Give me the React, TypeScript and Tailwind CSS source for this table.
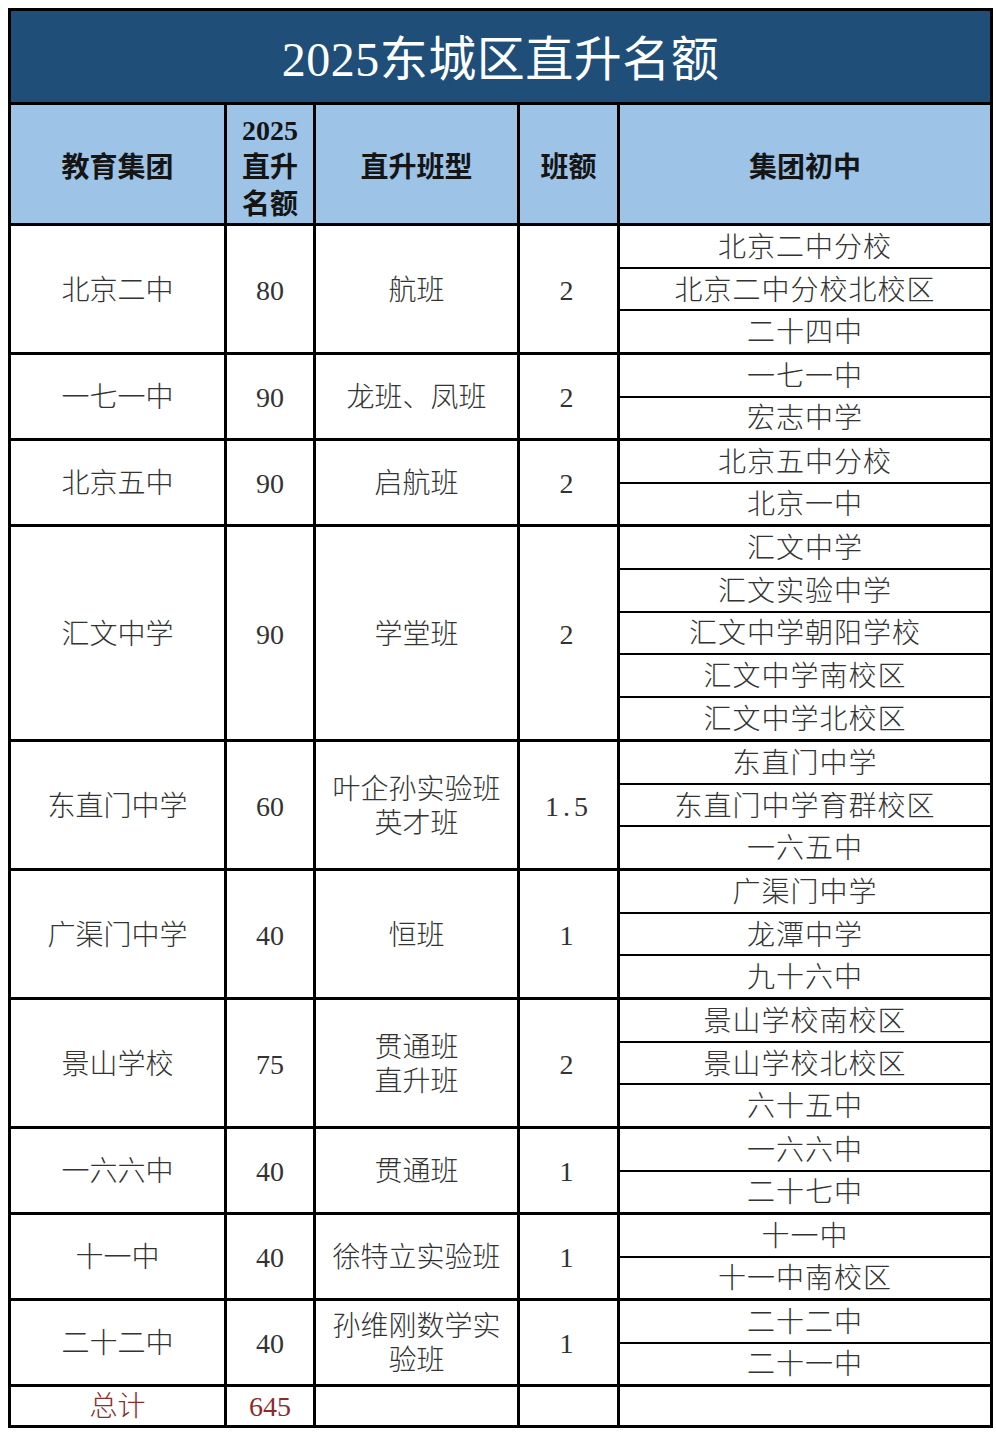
const groups = [
  { name: "北京二中", quota: "80", cls: ["航班"], num: "2", schools: ["北京二中分校", "北京二中分校北校区", "二十四中"] },
  { name: "一七一中", quota: "90", cls: ["龙班、凤班"], num: "2", schools: ["一七一中", "宏志中学"] },
  { name: "北京五中", quota: "90", cls: ["启航班"], num: "2", schools: ["北京五中分校", "北京一中"] },
  {
    name: "汇文中学",
    quota: "90",
    cls: ["学堂班"],
    num: "2",
    schools: ["汇文中学", "汇文实验中学", "汇文中学朝阳学校", "汇文中学南校区", "汇文中学北校区"],
  },
  { name: "东直门中学", quota: "60", cls: ["叶企孙实验班", "英才班"], num: "1.5", schools: ["东直门中学", "东直门中学育群校区", "一六五中"] },
  { name: "广渠门中学", quota: "40", cls: ["恒班"], num: "1", schools: ["广渠门中学", "龙潭中学", "九十六中"] },
  { name: "景山学校", quota: "75", cls: ["贯通班", "直升班"], num: "2", schools: ["景山学校南校区", "景山学校北校区", "六十五中"] },
  { name: "一六六中", quota: "40", cls: ["贯通班"], num: "1", schools: ["一六六中", "二十七中"] },
  { name: "十一中", quota: "40", cls: ["徐特立实验班"], num: "1", schools: ["十一中", "十一中南校区"] },
  { name: "二十二中", quota: "40", cls: ["孙维刚数学实", "验班"], num: "1", schools: ["二十二中", "二十一中"] },
];

// 每个子行 43px，减去组间 3px 线
const heights: Record<number, string> = {
  2: "h-[83px]",
  3: "h-[126px]",
  5: "h-[212px]",
};

const cols = "grid grid-cols-[213px_86px_201px_97px_1fr] gap-[3px]";
const cjk = "font-['Liberation_Serif','Noto_Sans_CJK_SC',serif]";

export default function App() {
  return (
    <div className="min-h-screen w-full bg-white pl-[8px] pt-[8px]">
      <div className={`w-[985px] bg-black p-[3px] flex flex-col gap-[3px] ${cjk}`}>
        <div className="h-[91px] bg-[#1f4e79] flex items-center justify-center pt-[6px] text-white text-[48px] leading-[56px] tracking-[0.5px]">
          2025东城区直升名额
        </div>

        <div className={`${cols} h-[118px]`}>
          {["教育集团", "2025\n直升\n名额", "直升班型", "班额", "集团初中"].map((h, i) => (
            <div
              key={i}
              className="bg-[#9dc3e6] flex items-center justify-center pt-[6px] text-center whitespace-pre-line font-bold text-[28px] leading-[37px] text-[#151515]"
            >
              {h}
            </div>
          ))}
        </div>

        {groups.map((g, i) => (
          <div key={i} className={`${cols} ${heights[g.schools.length]} text-[28px] leading-[34px] text-[#333]`}>
            <div className="bg-white flex items-center justify-center pt-[3px] font-light">{g.name}</div>
            <div className="bg-white flex items-center justify-center pt-[3px]">{g.quota}</div>
            <div className="bg-white flex flex-col items-center justify-center pt-[3px] font-light">
              {g.cls.map((c) => (
                <span key={c}>{c}</span>
              ))}
            </div>
            <div className="bg-white flex items-center justify-center pt-[3px] tracking-[4px]">{g.num}</div>
            <div className="flex flex-col gap-[2px]">
              {g.schools.map((s) => (
                <div key={s} className="flex-1 bg-white flex items-center justify-center pt-[3px] font-light tracking-[1px]">
                  {s}
                </div>
              ))}
            </div>
          </div>
        ))}

        <div className={`${cols} h-[38px] text-[28px] leading-[34px] text-[#8b2b2b]`}>
          <div className="bg-white flex items-center justify-center pt-[2px] font-light">总计</div>
          <div className="bg-white flex items-center justify-center pt-[2px]">645</div>
          <div className="bg-white" />
          <div className="bg-white" />
          <div className="bg-white" />
        </div>
      </div>
    </div>
  );
}
